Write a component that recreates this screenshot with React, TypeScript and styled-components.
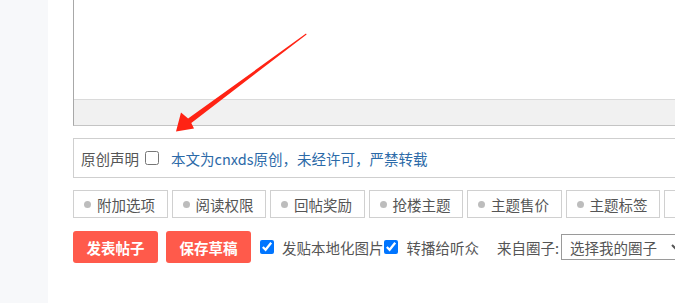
import React from "react";
import styled, { createGlobalStyle } from "styled-components";

const GlobalStyle = createGlobalStyle`
  html, body {
    margin: 0;
    padding: 0;
    background: #ffffff;
    overflow: hidden;
  }
  body {
    font-family: "Noto Sans CJK SC", "Noto Sans", sans-serif;
    color: #555;
  }
`;

const tabs = ["附加选项", "阅读权限", "回帖奖励", "抢楼主题", "主题售价", "主题标签", "投票"];

const App: React.FC = () => {
  return (
    <Page>
      <GlobalStyle />
      <Sidebar />
      <Main>
        <Editor>
          <EditArea />
          <StatusBar />
        </Editor>
        <Declare>
          <Label>原创声明</Label>
          <Check type="checkbox" />
          <Notice>本文为cnxds原创，未经许可，严禁转载</Notice>
        </Declare>
        <TabRow>
          {tabs.map((t) => (
            <Tab key={t}>
              <Dot />
              {t}
            </Tab>
          ))}
        </TabRow>
        <ActionRow>
          <RedButton>发表帖子</RedButton>
          <RedButton>保存草稿</RedButton>
          <Option>
            <Check type="checkbox" defaultChecked />
            发贴本地化图片
          </Option>
          <Option $tight>
            <Check type="checkbox" defaultChecked />
            转播给听众
          </Option>
          <FromLabel>来自圈子:</FromLabel>
          <Select defaultValue="0">
            <option value="0">选择我的圈子</option>
          </Select>
        </ActionRow>
      </Main>
      <Arrow viewBox="0 0 675 303" width="675" height="303">
        <polygon
          points="306,33.6 306.6,34.4 191.3,122.9 194,128.5 176,131.5 181,112.5 188.1,118.6"
          fill="#ff2314"
        />
      </Arrow>
    </Page>
  );
};

export default App;

const Page = styled.div`
  position: relative;
  display: flex;
  width: 675px;
  height: 303px;
  overflow: hidden;
`;

const Sidebar = styled.div`
  width: 48px;
  flex-shrink: 0;
  background-color: #f7f8fa;
`;

const Main = styled.div`
  flex-shrink: 0;
  width: 720px;
  padding-left: 25px;
  display: flex;
  flex-direction: column;
`;

const Editor = styled.div`
  border-left: 1px solid #a8a8a8;
  border-bottom: 1px solid #c4c4c4;
  display: flex;
  flex-direction: column;
`;

const EditArea = styled.div`
  height: 99px;
  background: #fff;
`;

const StatusBar = styled.div`
  height: 25px;
  border-top: 1px solid #dadada;
  background: #f1f1f1;
`;

const Declare = styled.div`
  margin-top: 12px;
  height: 38px;
  border: 1px solid #cfcfcf;
  display: flex;
  align-items: center;
  padding-left: 7px;
  font-size: 14.5px;
`;

const Label = styled.span`
  color: #555;
`;

const Check = styled.input`
  width: 14px;
  height: 14px;
  margin: 0 8px 0 6px;
  flex-shrink: 0;
`;

const Notice = styled.span`
  color: #2c6aa8;
  margin-left: 4px;
`;

const TabRow = styled.div`
  margin-top: 12px;
  display: flex;
  gap: 4px;
`;

const Tab = styled.div`
  box-sizing: border-box;
  width: 94.5px;
  height: 28px;
  flex-shrink: 0;
  border: 1px solid #d0d0d0;
  display: flex;
  align-items: center;
  padding-left: 10px;
  font-size: 14.5px;
  color: #555;
  white-space: nowrap;
`;

const Dot = styled.span`
  width: 7px;
  height: 7px;
  border-radius: 50%;
  background: #bdbdbd;
  margin-right: 6px;
`;

const ActionRow = styled.div`
  margin-top: 13px;
  display: flex;
  align-items: center;
  font-size: 14.5px;
  color: #555;
`;

const RedButton = styled.button`
  width: 85px;
  height: 32px;
  margin-right: 8px;
  border: none;
  border-radius: 3px;
  background: #ff5a4b;
  color: #fff;
  font-family: "Noto Sans CJK SC", sans-serif;
  font-weight: 700;
  font-size: 14.5px;
  padding: 0;
`;

const Option = styled.label<{ $tight?: boolean }>`
  display: flex;
  align-items: center;
  white-space: nowrap;
  ${Check} {
    margin: 0 ${(p) => (p.$tight ? "9px" : "8px")} 0 ${(p) => (p.$tight ? "0" : "1px")};
  }
`;

const FromLabel = styled.span`
  margin-left: 18px;
  margin-right: 2px;
  white-space: nowrap;
`;

const Select = styled.select`
  width: 124px;
  height: 26px;
  flex-shrink: 0;
  border: 1px solid #9a9a9a;
  border-radius: 0;
  background: #fff;
  color: #555;
  font-family: "Noto Sans CJK SC", sans-serif;
  font-size: 14.5px;
  padding: 0 2px 0 4px;
`;

const Arrow = styled.svg`
  position: absolute;
  left: 0;
  top: 0;
  pointer-events: none;
`;
